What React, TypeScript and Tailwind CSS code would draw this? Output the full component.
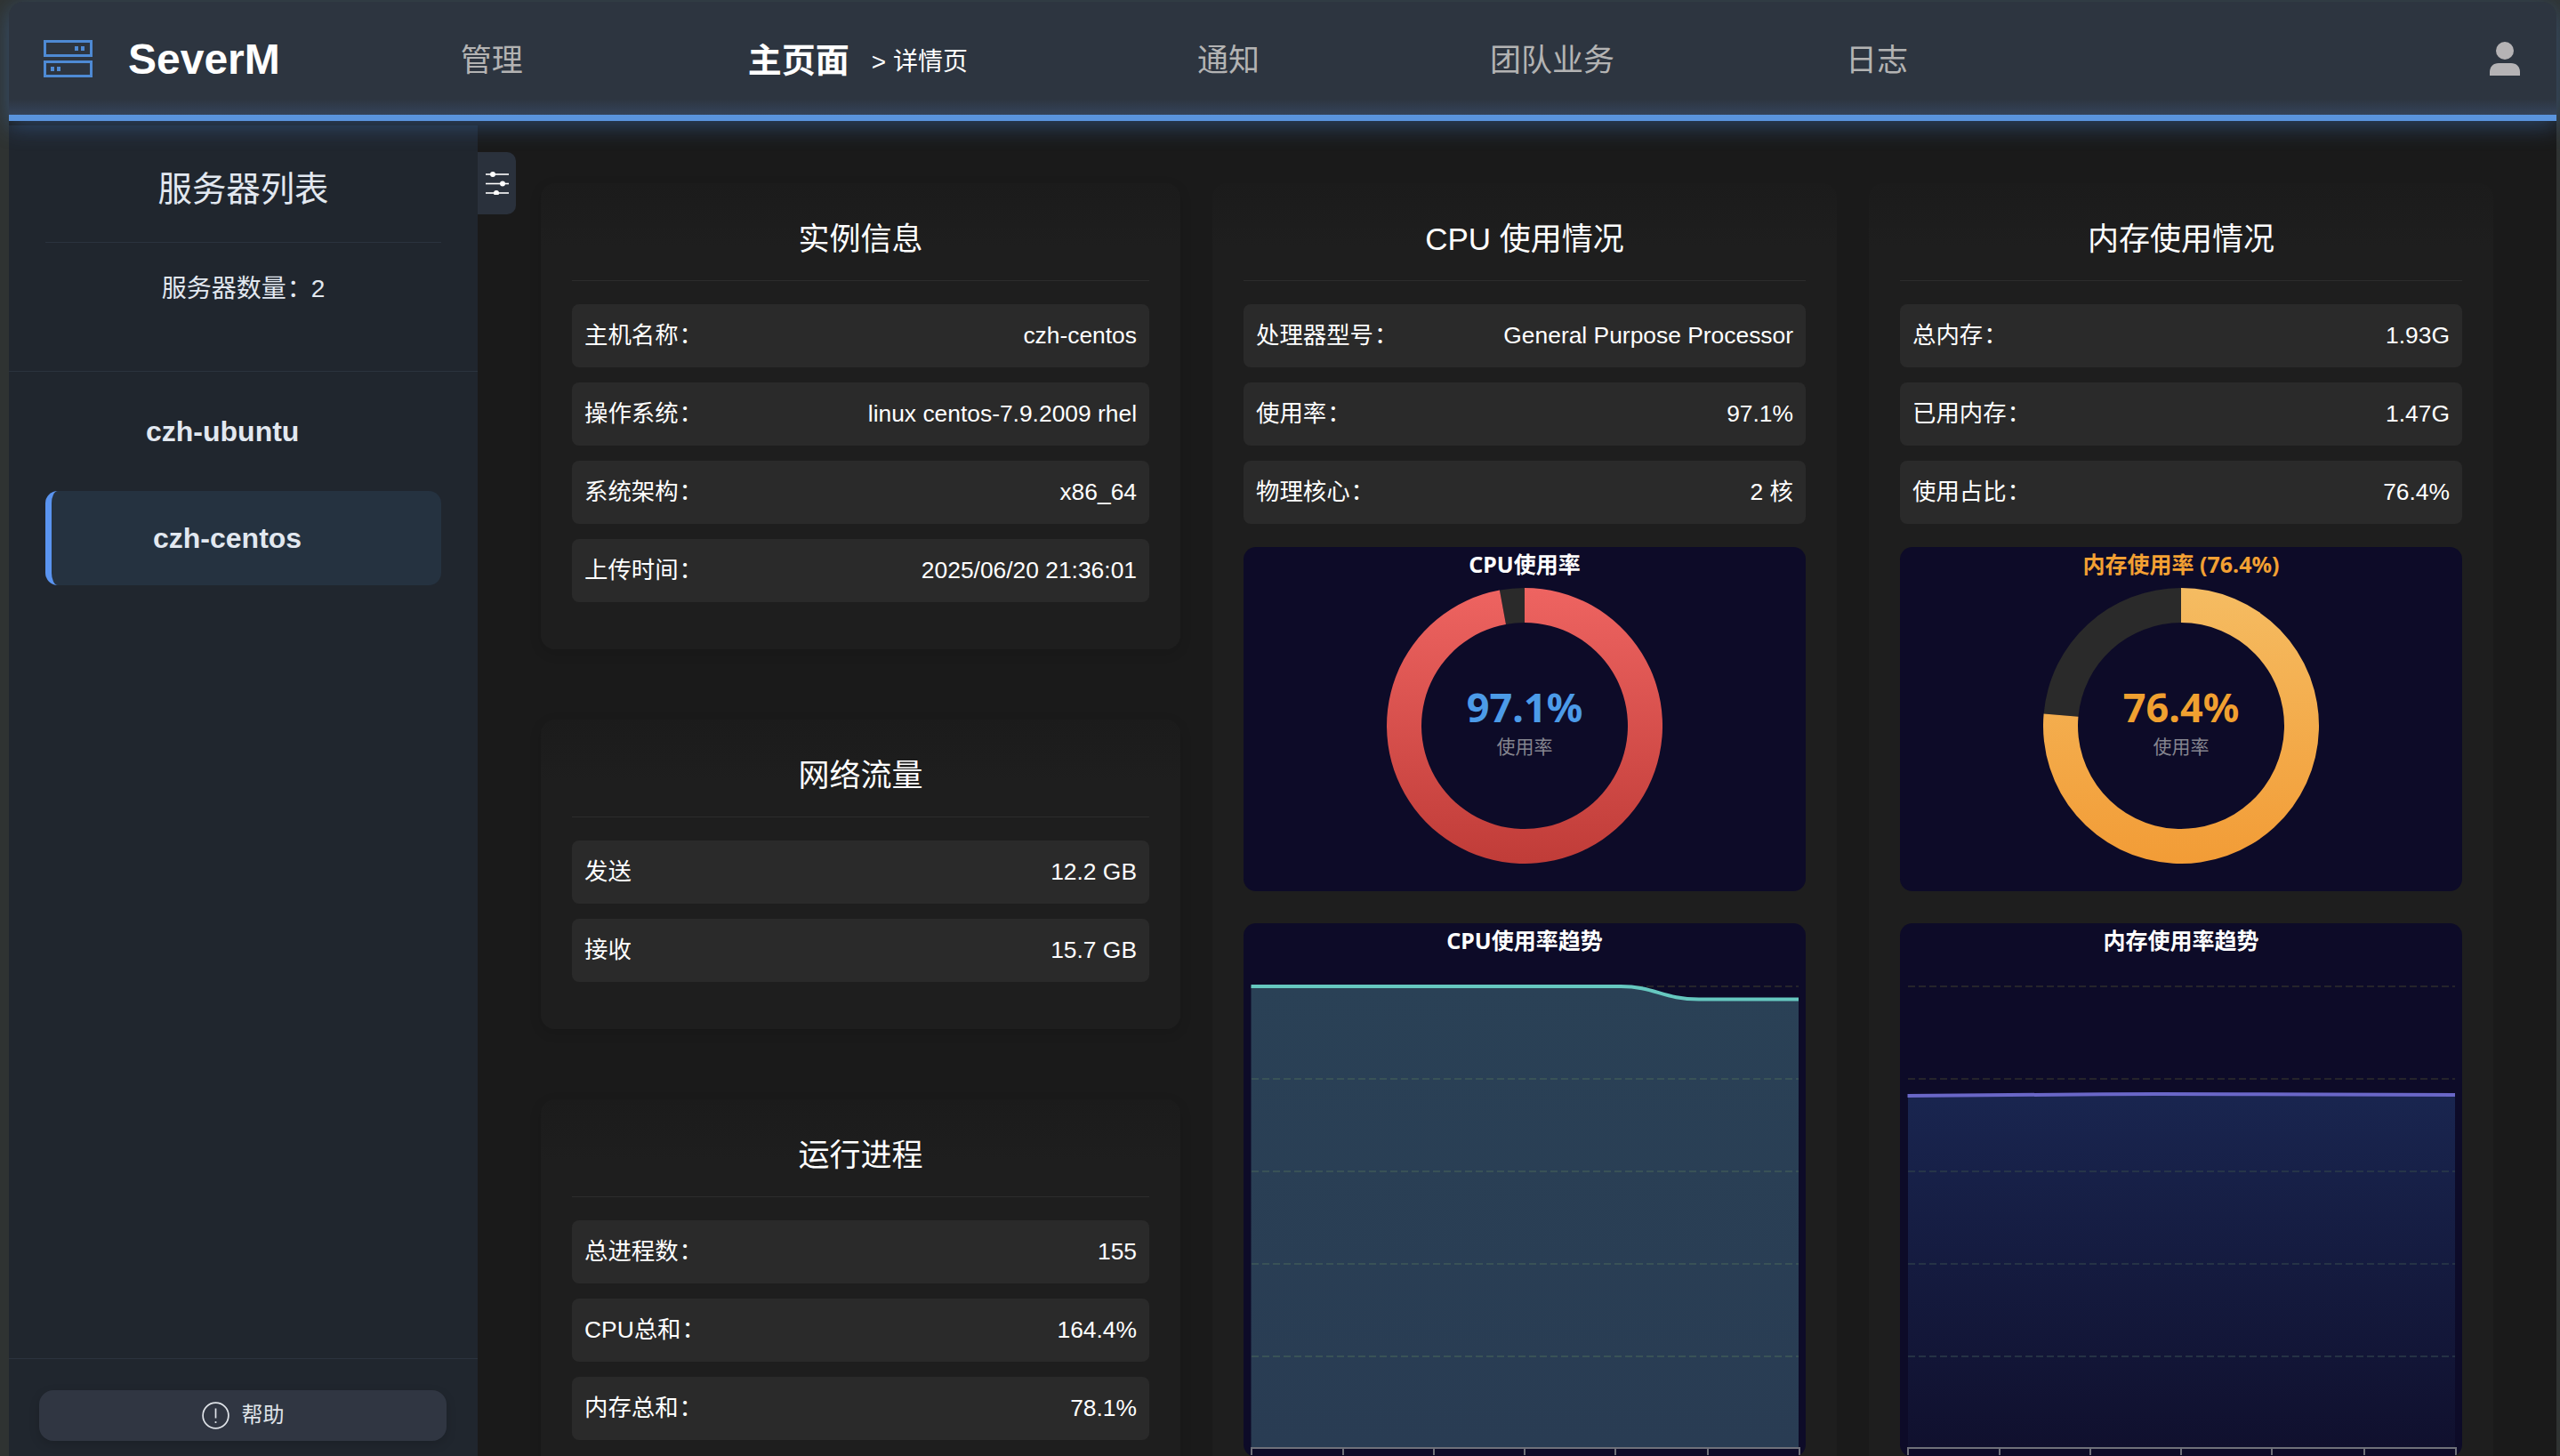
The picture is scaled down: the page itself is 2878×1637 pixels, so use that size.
import React from "react";

const cjk = "font-['Liberation_Sans','Noto_Sans_CJK_SC',sans-serif]";
const yahei = "font-['Noto_Sans','Noto_Sans_CJK_SC',sans-serif]";

function Colon() {
  return <span className="ml-[1px] mr-[-1px]">：</span>;
}

function Row({ label, value, colon = true }: { label: string; value: string; colon?: boolean }) {
  return (
    <div className="flex h-[71px] items-center justify-between rounded-[8px] bg-[#2a2a2a] px-[14px] pb-[2px] text-[26.4px] leading-[36px] text-white">
      <span className="whitespace-nowrap">
        {label}
        {colon && <Colon />}
      </span>
      <span className="whitespace-nowrap">{value}</span>
    </div>
  );
}

function CardHead({ title }: { title: string }) {
  return (
    <div className="h-[110px] border-b border-[#2c2c2c] pt-[37px] text-center text-[35px] leading-[52px] text-white">
      {title}
    </div>
  );
}

function Card({ title, rows }: { title: string; rows: [string, string, boolean?][] }) {
  return (
    <section className="rounded-[16px] bg-[linear-gradient(#1b1b1b,#1e1e1e_70px)] px-[35px] pb-[53px] shadow-[0_4px_14px_rgba(0,0,0,0.12)]">
      <CardHead title={title} />
      <div className="mt-[26px] flex flex-col gap-[17px]">
        {rows.map(([l, v, c]) => (
          <Row key={l} label={l} value={v} colon={c !== false} />
        ))}
      </div>
    </section>
  );
}

function arc(cx: number, cy: number, ro: number, ri: number, a0: number, a1: number) {
  const p = (r: number, a: number) => {
    const t = (a * Math.PI) / 180;
    return `${(cx + r * Math.sin(t)).toFixed(2)} ${(cy - r * Math.cos(t)).toFixed(2)}`;
  };
  const large = a1 - a0 > 180 ? 1 : 0;
  return `M${p(ro, a0)} A${ro} ${ro} 0 ${large} 1 ${p(ro, a1)} L${p(ri, a1)} A${ri} ${ri} 0 ${large} 0 ${p(ri, a0)} Z`;
}

function Gauge({
  id,
  title,
  titleClass,
  pct,
  top,
  bottom,
  numClass,
}: {
  id: string;
  title: string;
  titleClass: string;
  pct: number;
  top: string;
  bottom: string;
  numClass: string;
}) {
  const end = (pct / 100) * 360;
  return (
    <div className={`flex h-[387px] flex-col items-center rounded-[14px] bg-[#0d0b28] ${yahei}`}>
      <div className={`h-[38px] text-[25px] font-bold leading-[38px] ${titleClass}`}>{title}</div>
      <div className="relative mt-[8px] h-[310px] w-[310px]">
        <svg width="310" height="310" viewBox="0 0 310 310">
          <defs>
            <linearGradient id={id} gradientUnits="userSpaceOnUse" x1="0" y1="0" x2="0" y2="310">
              <stop offset="0" stopColor={top} />
              <stop offset="1" stopColor={bottom} />
            </linearGradient>
          </defs>
          <path d={arc(155, 155, 155, 116, end, 360)} fill="#2a2a2a" />
          <path d={arc(155, 155, 155, 116, 0, end)} fill={`url(#${id})`} />
        </svg>
        <div className="absolute inset-0 flex flex-col items-center pt-[104px]">
          <div className={`text-[45px] font-bold leading-[60px] ${numClass}`}>{pct}%</div>
          <div className="mt-[-1px] text-[21px] leading-[30px] text-[#85858f]">使用率</div>
        </div>
      </div>
    </div>
  );
}

function Trend({
  id,
  title,
  line,
  area,
  stroke,
  top,
  bottom,
  gridOn,
}: {
  id: string;
  title: string;
  line: string;
  area: string;
  stroke: string;
  top: string;
  bottom: string;
  gridOn: string;
}) {
  const grids = [33, 137, 241, 345, 449];
  const ticks = [9, 112, 214, 316, 418, 522, 625];
  return (
    <div className={`h-[600px] overflow-hidden rounded-[14px] bg-[#0d0b28] ${yahei}`}>
      <div className="h-[38px] text-center text-[25px] font-bold leading-[38px] text-white">{title}</div>
      <svg className="block" width="632" height="562" viewBox="0 0 632 562">
        <defs>
          <linearGradient id={id} gradientUnits="userSpaceOnUse" x1="0" y1="30" x2="0" y2="552">
            <stop offset="0" stopColor={top} />
            <stop offset="1" stopColor={bottom} />
          </linearGradient>
          <clipPath id={`${id}c`}>
            <rect x="8.5" y="0" width="615.5" height="560" />
          </clipPath>
          <clipPath id={`${id}a`}>
            <path d={area} />
          </clipPath>
        </defs>
        {grids.map((y) => (
          <line key={y} x1="9" x2="624" y1={y} y2={y} stroke="#2e2e2c" strokeWidth="1.5" strokeDasharray="8 4" />
        ))}
        <path d={area} fill={`url(#${id})`} />
        <g clipPath={`url(#${id}a)`}>
          {grids.map((y) => (
            <line key={y} x1="9" x2="624" y1={y} y2={y} stroke={gridOn} strokeWidth="1.5" strokeDasharray="8 4" />
          ))}
        </g>
        <path d={line} fill="none" stroke={stroke} strokeWidth="4" clipPath={`url(#${id}c)`} />
        <line x1="8" x2="626" y1="552" y2="552" stroke="#6e7079" strokeWidth="2" />
        {ticks.map((x) => (
          <line key={x} x1={x} x2={x} y1="552" y2="560" stroke="#6e7079" strokeWidth="2" />
        ))}
      </svg>
    </div>
  );
}

function Logo() {
  return (
    <svg width="55" height="42" viewBox="0 0 55 42" className="shrink-0">
      <rect x="1.5" y="1.5" width="52" height="16" fill="none" stroke="#4e8ad4" strokeWidth="3" />
      <rect x="1.5" y="24.5" width="52" height="16" fill="none" stroke="#4e8ad4" strokeWidth="3" />
      <rect x="35" y="7" width="4" height="5" fill="#4e8ad4" />
      <rect x="42" y="7" width="4" height="5" fill="#4e8ad4" />
      <rect x="8" y="30" width="4" height="5" fill="#4e8ad4" />
      <rect x="15" y="30" width="4" height="5" fill="#4e8ad4" />
    </svg>
  );
}

function UserIcon() {
  return (
    <svg width="34" height="38" viewBox="0 0 34 38" className="shrink-0" fill="#b5b3b5">
      <circle cx="17" cy="10" r="10" />
      <path d="M0 34 C0 28 4 24 10 24 H24 C30 24 34 28 34 34 V38 H0 Z" />
    </svg>
  );
}

function SlidersIcon() {
  return (
    <svg width="26" height="26" viewBox="0 0 26 26" stroke="#fff" strokeWidth="1.6" fill="#fff">
      <line x1="0" x2="26" y1="3" y2="3" />
      <line x1="0" x2="26" y1="13.5" y2="13.5" />
      <line x1="0" x2="26" y1="24" y2="24" />
      <circle cx="8" cy="3" r="2.2" />
      <circle cx="19" cy="13.5" r="2.2" />
      <circle cx="12" cy="24" r="2.2" />
    </svg>
  );
}

function HelpIcon() {
  return (
    <svg width="31" height="31" viewBox="0 0 31 31" fill="none" stroke="#dfe3e8" strokeWidth="1.7" className="shrink-0">
      <circle cx="15.5" cy="15.5" r="14.4" />
      <line x1="15.5" x2="15.5" y1="7.5" y2="18.5" />
      <circle cx="15.5" cy="23" r="1.1" fill="#dfe3e8" stroke="none" />
    </svg>
  );
}

export default function App() {
  return (
    <div className={`flex h-[1637px] w-[2878px] flex-col overflow-hidden bg-[#2f3332] pl-[10px] pr-[4px] pt-[2px] ${cjk}`}>
      <header className="relative z-10 flex h-[134px] shrink-0 items-center rounded-t-[16px] border-b-[7px] border-[#5a94de] bg-[linear-gradient(#2d3540_0,#2d3540_86%,#34435a_100%)] shadow-[0_6px_26px_rgba(70,130,210,0.4)]">
        <div className="ml-[39px] flex items-center gap-[40px]">
          <Logo />
          <span className="pt-[2px] text-[48px] font-bold leading-[56px] text-white">SeverM</span>
        </div>
        <nav className="flex items-center pt-[5px] text-[35px] leading-[48px] text-[#b3b3b3]">
          <span className="ml-[203px] whitespace-nowrap">管理</span>
          <span className="ml-[253px] whitespace-nowrap text-[38px] font-bold leading-[52px] text-white">主页面</span>
          <span className="ml-[25px] whitespace-nowrap pt-[3px] text-[28px] text-white">&gt; 详情页</span>
          <span className="ml-[258px] whitespace-nowrap">通知</span>
          <span className="ml-[259px] whitespace-nowrap">团队业务</span>
          <span className="ml-[260px] whitespace-nowrap">日志</span>
        </nav>
        <div className="ml-auto mr-[41px]">
          <UserIcon />
        </div>
      </header>

      <div className="flex min-h-0 flex-1 bg-[#1a1a1a]">
        <aside className="mt-[5px] flex w-[527px] shrink-0 flex-col bg-[#20262e] text-[#e2e8f0]">
          <div className="h-[277px] border-b border-[#2b333e] px-[41px]">
            <div className="h-[132px] border-b border-[#2b333e] pt-[46px] text-center text-[38.4px] leading-[52px]">服务器列表</div>
            <div className="mt-[30px] text-center text-[28px] leading-[44px]">
              服务器数量
              <Colon />2
            </div>
          </div>
          <div className="flex flex-1 flex-col px-[41px]">
            <div className="mt-[39px] h-[56px] pl-[113px] text-[32px] font-bold leading-[56px]">czh-ubuntu</div>
            <div className="mt-[39px] h-[106px] rounded-[14px] border-l-[7px] border-[#5a94f0] bg-[#253240] pl-[114px] text-[32px] font-bold leading-[106px]">
              czh-centos
            </div>
          </div>
          <div className="h-[110px] shrink-0 border-t border-[#2b333e] px-[34px] pt-[35px]">
            <button className="flex h-[57px] w-[458px] items-center justify-center gap-[14px] rounded-[16px] bg-[#303642] pb-[1px] text-[24px] leading-[32px] text-[#dfe3e8] shadow-[0_4px_12px_rgba(0,0,0,0.15)]">
              <HelpIcon />
              帮助
            </button>
          </div>
        </aside>

        <main className="relative min-w-0 flex-1 overflow-hidden pl-[71px] pt-[70px]">
          <button className="absolute left-0 top-[35px] flex h-[70px] w-[43px] items-center justify-center rounded-r-[10px] bg-[#2a313c]">
            <SlidersIcon />
          </button>
          <div className="flex items-start gap-[36px]">
            <div className="flex w-[719px] shrink-0 flex-col gap-[79px]">
              <Card
                title="实例信息"
                rows={[
                  ["主机名称", "czh-centos"],
                  ["操作系统", "linux centos-7.9.2009 rhel"],
                  ["系统架构", "x86_64"],
                  ["上传时间", "2025/06/20 21:36:01"],
                ]}
              />
              <Card
                title="网络流量"
                rows={[
                  ["发送", "12.2 GB", false],
                  ["接收", "15.7 GB", false],
                ]}
              />
              <Card
                title="运行进程"
                rows={[
                  ["总进程数", "155"],
                  ["CPU总和", "164.4%"],
                  ["内存总和", "78.1%"],
                ]}
              />
            </div>

            <section className="w-[702px] shrink-0 rounded-t-[16px] bg-[linear-gradient(#1b1b1b,#1e1e1e_70px)] px-[35px] pb-[20px]">
              <CardHead title="CPU 使用情况" />
              <div className="mt-[26px] flex flex-col gap-[17px]">
                <Row label="处理器型号" value="General Purpose Processor" />
                <Row label="使用率" value="97.1%" />
                <Row label="物理核心" value="2 核" />
              </div>
              <div className="mt-[26px] flex flex-col gap-[36px]">
                <Gauge id="g1" title="CPU使用率" titleClass="text-white" pct={97.1} top="#ee6461" bottom="#c03c38" numClass="text-[#4c9be8]" />
                <Trend
                  id="t1"
                  title="CPU使用率趋势"
                  stroke="#66c8c0"
                  top="#2a4156"
                  bottom="#293c53"
                  gridOn="#3f5a58"
                  line="M8 33 L424 33 C462 33 472 47.5 512 47.5 L625 47.5"
                  area="M8.5 33 L424 33 C462 33 472 47.5 512 47.5 L624 47.5 L624 552 L8.5 552 Z"
                />
              </div>
            </section>

            <section className="w-[702px] shrink-0 rounded-t-[16px] bg-[linear-gradient(#1b1b1b,#1e1e1e_70px)] px-[35px] pb-[20px]">
              <CardHead title="内存使用情况" />
              <div className="mt-[26px] flex flex-col gap-[17px]">
                <Row label="总内存" value="1.93G" />
                <Row label="已用内存" value="1.47G" />
                <Row label="使用占比" value="76.4%" />
              </div>
              <div className="mt-[26px] flex flex-col gap-[36px]">
                <Gauge id="g2" title="内存使用率 (76.4%)" titleClass="text-[#f3a033]" pct={76.4} top="#f5bc62" bottom="#f29c36" numClass="text-[#f0a030]" />
                <Trend
                  id="t2"
                  title="内存使用率趋势"
                  stroke="#6a67c8"
                  top="#1c2c5a"
                  bottom="#10102e"
                  gridOn="#2d3d4a"
                  line="M8 156 C120 156 200 154 290 154 C400 154 500 155 625 155"
                  area="M9 156 C120 156 200 154 290 154 C400 154 500 155 624 155 L624 552 L9 552 Z"
                />
              </div>
            </section>
          </div>
        </main>
      </div>
    </div>
  );
}
